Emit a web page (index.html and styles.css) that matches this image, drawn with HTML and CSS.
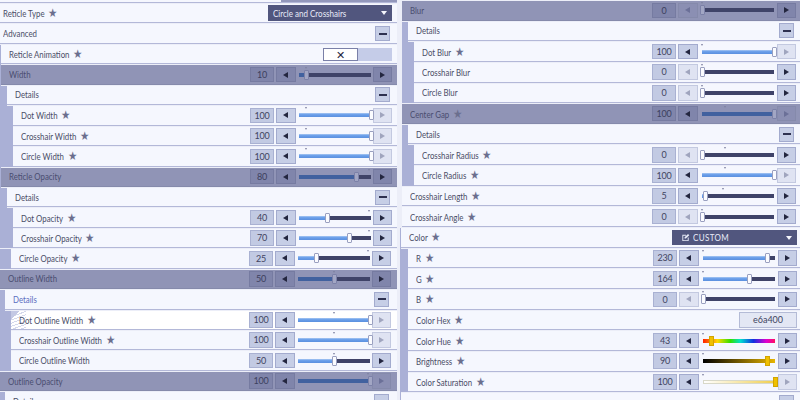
FILE: index.html
```html
<!DOCTYPE html>
<html lang="en">
<head>
    <meta charset="UTF-8">
    <title>Reticle Settings</title>
    <link rel="stylesheet" href="styles.css">
</head>
<body>
<div class="page">

    <!-- left column -->
    <div class="col col-left">
        <div class="top-row"><div class="top-row-select"></div></div>
        <div class="row flat">
            <span class="label">Reticle Type <i>★</i></span>
            <div class="select"><span>Circle and Crosshairs</span></div>
        </div>
        <div class="row flat">
            <span class="label">Advanced</span>
            <button class="minus"></button>
        </div>
        <div class="sub s1">
            <div class="row">
                <span class="label">Reticle Animation <i>★</i></span>
                <div class="toggle"><span class="toggle-off">✕</span></div>
            </div>
            <div class="row dark">
                <span class="label">Width</span>
                <div class="value">10</div><button class="btn prev"></button>
                <div class="slider"><div class="track"><div class="fill" style="width:10%"></div></div><b class="tick" style="left:10%"></b><b class="thumb" style="left:10%"></b></div>
                <button class="btn next"></button>
            </div>
            <div class="sub s6">
                <div class="row">
                    <span class="label">Details</span>
                    <button class="minus"></button>
                </div>
                <div class="sub s6">
                    <div class="row">
                        <span class="label">Dot Width <i>★</i></span>
                        <div class="value">100</div><button class="btn prev"></button>
                        <div class="slider"><div class="track"><div class="fill" style="width:100%"></div></div><b class="tick" style="left:10%"></b><b class="thumb" style="left:100%"></b></div>
                        <button class="btn next off"></button>
                    </div>
                    <div class="row">
                        <span class="label">Crosshair Width <i>★</i></span>
                        <div class="value">100</div><button class="btn prev"></button>
                        <div class="slider"><div class="track"><div class="fill" style="width:100%"></div></div><b class="tick" style="left:10%"></b><b class="thumb" style="left:100%"></b></div>
                        <button class="btn next off"></button>
                    </div>
                    <div class="row">
                        <span class="label">Circle Width <i>★</i></span>
                        <div class="value">100</div><button class="btn prev"></button>
                        <div class="slider"><div class="track"><div class="fill" style="width:100%"></div></div><b class="tick" style="left:10%"></b><b class="thumb" style="left:100%"></b></div>
                        <button class="btn next off"></button>
                    </div>
                </div>
            </div>
            <div class="row dark">
                <span class="label">Reticle Opacity</span>
                <div class="value">80</div><button class="btn prev"></button>
                <div class="slider"><div class="track"><div class="fill" style="width:80%"></div></div><b class="tick" style="left:98%"></b><b class="thumb" style="left:80%"></b></div>
                <button class="btn next"></button>
            </div>
            <div class="sub s6">
                <div class="row">
                    <span class="label">Details</span>
                    <button class="minus"></button>
                </div>
                <div class="sub s6">
                    <div class="row">
                        <span class="label">Dot Opacity <i>★</i></span>
                        <div class="value">40</div><button class="btn prev"></button>
                        <div class="slider"><div class="track"><div class="fill" style="width:40%"></div></div><b class="tick" style="left:98%"></b><b class="thumb" style="left:40%"></b></div>
                        <button class="btn next"></button>
                    </div>
                    <div class="row">
                        <span class="label">Crosshair Opacity <i>★</i></span>
                        <div class="value">70</div><button class="btn prev"></button>
                        <div class="slider"><div class="track"><div class="fill" style="width:70%"></div></div><b class="tick" style="left:98%"></b><b class="thumb" style="left:70%"></b></div>
                        <button class="btn next"></button>
                    </div>
                </div>
            </div>
        </div>

        <!-- this part sits a pixel further left in the capture -->
        <div class="sub s11">
            <div class="row skew">
                <span class="label">Circle Opacity <i>★</i></span>
                <div class="value">25</div><button class="btn prev"></button>
                <div class="slider"><div class="track"><div class="fill" style="width:25%"></div></div><b class="tick" style="left:98%"></b><b class="thumb" style="left:25%"></b></div>
                <button class="btn next"></button>
            </div>
        </div>
        <div class="row dark skew">
            <span class="label">Outline Width</span>
            <div class="value">50</div><button class="btn prev"></button>
            <div class="slider"><div class="track"><div class="fill" style="width:50%"></div></div><b class="tick" style="left:50%"></b><b class="thumb" style="left:50%"></b></div>
            <button class="btn next"></button>
        </div>
        <div class="sub s5">
            <div class="row skew">
                <span class="label active">Details</span>
                <button class="minus"></button>
            </div>
            <div class="sub s6">
                <div class="row skew hover">
                    <span class="label">Dot Outline Width <i>★</i></span>
                    <div class="value">100</div><button class="btn prev"></button>
                    <div class="slider"><div class="track"><div class="fill" style="width:100%"></div></div><b class="tick" style="left:50%"></b><b class="thumb" style="left:100%"></b></div>
                    <button class="btn next off"></button>
                </div>
                <div class="row skew">
                    <span class="label">Crosshair Outline Width <i>★</i></span>
                    <div class="value">100</div><button class="btn prev"></button>
                    <div class="slider"><div class="track"><div class="fill" style="width:100%"></div></div><b class="tick" style="left:50%"></b><b class="thumb" style="left:100%"></b></div>
                    <button class="btn next off"></button>
                </div>
                <div class="row skew">
                    <span class="label">Circle Outline Width</span>
                    <div class="value">50</div><button class="btn prev"></button>
                    <div class="slider"><div class="track"><div class="fill" style="width:50%"></div></div><b class="tick" style="left:50%"></b><b class="thumb" style="left:50%"></b></div>
                    <button class="btn next"></button>
                </div>
            </div>
        </div>
        <div class="row dark skew">
            <span class="label">Outline Opacity</span>
            <div class="value">100</div><button class="btn prev"></button>
            <div class="slider"><div class="track"><div class="fill" style="width:100%"></div></div><b class="tick" style="left:98%"></b><b class="thumb" style="left:100%"></b></div>
            <button class="btn next off"></button>
        </div>
        <div class="sub s5">
            <div class="row skew">
                <span class="label">Details</span>
                <button class="minus"></button>
            </div>
        </div>
    </div>

    <!-- right column -->
    <div class="col col-right">
        <div class="sub s2">
            <div class="row dark">
                <span class="label">Blur</span>
                <div class="value">0</div><button class="btn prev off"></button>
                <div class="slider"><div class="track"></div><b class="tick" style="left:0"></b><b class="thumb" style="left:0"></b></div>
                <button class="btn next"></button>
            </div>
            <div class="sub s6">
                <div class="row">
                    <span class="label">Details</span>
                    <button class="minus"></button>
                </div>
                <div class="sub s6">
                    <div class="row">
                        <span class="label">Dot Blur <i>★</i></span>
                        <div class="value">100</div><button class="btn prev"></button>
                        <div class="slider"><div class="track"><div class="fill" style="width:100%"></div></div><b class="tick" style="left:0"></b><b class="thumb" style="left:100%"></b></div>
                        <button class="btn next off"></button>
                    </div>
                    <div class="row">
                        <span class="label">Crosshair Blur</span>
                        <div class="value">0</div><button class="btn prev off"></button>
                        <div class="slider"><div class="track"></div><b class="tick" style="left:0"></b><b class="thumb" style="left:0"></b></div>
                        <button class="btn next"></button>
                    </div>
                    <div class="row">
                        <span class="label">Circle Blur</span>
                        <div class="value">0</div><button class="btn prev off"></button>
                        <div class="slider"><div class="track"></div><b class="tick" style="left:0"></b><b class="thumb" style="left:0"></b></div>
                        <button class="btn next"></button>
                    </div>
                </div>
            </div>
            <div class="row dark">
                <span class="label">Center Gap <i>★</i></span>
                <div class="value">100</div><button class="btn prev"></button>
                <div class="slider"><div class="track"><div class="fill" style="width:100%"></div></div><b class="tick" style="left:33%"></b><b class="thumb" style="left:100%"></b></div>
                <button class="btn next off"></button>
            </div>
            <div class="sub s6">
                <div class="row">
                    <span class="label">Details</span>
                    <button class="minus"></button>
                </div>
                <div class="sub s6">
                    <div class="row">
                        <span class="label">Crosshair Radius <i>★</i></span>
                        <div class="value">0</div><button class="btn prev off"></button>
                        <div class="slider"><div class="track"></div><b class="tick" style="left:33%"></b><b class="thumb" style="left:0"></b></div>
                        <button class="btn next"></button>
                    </div>
                    <div class="row">
                        <span class="label">Circle Radius <i>★</i></span>
                        <div class="value">100</div><button class="btn prev"></button>
                        <div class="slider"><div class="track"><div class="fill" style="width:100%"></div></div><b class="tick" style="left:33%"></b><b class="thumb" style="left:100%"></b></div>
                        <button class="btn next off"></button>
                    </div>
                </div>
            </div>
            <div class="row">
                <span class="label">Crosshair Length <i>★</i></span>
                <div class="value">5</div><button class="btn prev"></button>
                <div class="slider"><div class="track"><div class="fill" style="width:5%"></div></div><b class="tick" style="left:30%"></b><b class="thumb" style="left:5%"></b></div>
                <button class="btn next"></button>
            </div>
            <div class="row">
                <span class="label">Crosshair Angle <i>★</i></span>
                <div class="value">0</div><button class="btn prev off"></button>
                <div class="slider"><div class="track"></div><b class="tick" style="left:0"></b><b class="thumb" style="left:0"></b></div>
                <button class="btn next"></button>
            </div>
        </div>
        <div class="sub s1">
            <div class="row tight">
                <span class="label">Color <i>★</i></span>
                <div class="select select-custom">
                    <svg class="edit-icon" viewBox="0 0 10 10"><path d="M1.5 2h4v1h-3v5h5v-3h1v4h-7z M4 6.200l0-1.400l3.800-3.800l1.400 1.400l-3.800 3.800z" fill="#e8ebf8"/></svg>
                    <span>CUSTOM</span>
                </div>
            </div>
            <div class="sub s6b">
                <div class="row flush">
                    <span class="label">R <i>★</i></span>
                    <div class="value">230</div><button class="btn prev"></button>
                    <div class="slider"><div class="track"><div class="fill" style="width:90%"></div></div><b class="tick" style="left:0"></b><b class="thumb" style="left:90%"></b></div>
                    <button class="btn next"></button>
                </div>
                <div class="row flush">
                    <span class="label">G <i>★</i></span>
                    <div class="value">164</div><button class="btn prev"></button>
                    <div class="slider"><div class="track"><div class="fill" style="width:64%"></div></div><b class="tick" style="left:0"></b><b class="thumb" style="left:64%"></b></div>
                    <button class="btn next"></button>
                </div>
                <div class="row flush">
                    <span class="label">B <i>★</i></span>
                    <div class="value">0</div><button class="btn prev off"></button>
                    <div class="slider"><div class="track"></div><b class="tick" style="left:0"></b><b class="thumb" style="left:0"></b></div>
                    <button class="btn next"></button>
                </div>
                <div class="row flush">
                    <span class="label">Color Hex <i>★</i></span>
                    <div class="hex">e6a400</div>
                </div>
                <div class="row flush">
                    <span class="label">Color Hue <i>★</i></span>
                    <div class="value">43</div><button class="btn prev"></button>
                    <div class="slider"><div class="track track-hue"></div><b class="tick" style="left:0"></b><b class="thumb thumb-gold" style="left:12%"></b></div>
                    <button class="btn next"></button>
                </div>
                <div class="row flush">
                    <span class="label">Brightness <i>★</i></span>
                    <div class="value">90</div><button class="btn prev"></button>
                    <div class="slider"><div class="track track-bright"></div><b class="tick" style="left:0"></b><b class="thumb thumb-gold" style="left:90%"></b></div>
                    <button class="btn next"></button>
                </div>
                <div class="row flush">
                    <span class="label">Color Saturation <i>★</i></span>
                    <div class="value">100</div><button class="btn prev"></button>
                    <div class="slider"><div class="track track-sat"></div><b class="tick" style="left:0"></b><b class="thumb thumb-gold" style="left:100%"></b></div>
                    <button class="btn next off"></button>
                </div>
            </div>
            <div class="row">
                <span class="label"></span>
                <button class="minus"></button>
            </div>
        </div>
    </div>

</div>
</body>
</html>
```

FILE: styles.css
```css
* {
    box-sizing: border-box;
    margin: 0;
    padding: 0;
}

body {
    width: 800px;
    height: 400px;
    overflow: hidden;
    background-color: #eceef8;
    font-family: Lato, "Liberation Sans", sans-serif;
    font-size: 9px;
    color: #4a4d66;
}

.page {
    display: flex;
    height: 400px;
    overflow: hidden;
}

.col {
    display: flex;
    flex-direction: column;
    gap: 1px;
}

.col-left {
    width: 397px;
    margin-right: 3px;
}

.col-right {
    width: 400px;
    padding-top: 1px;
}

.top-row {
    flex-shrink: 0;
    height: 3px;
    background-color: #f5f7fe;
    border-bottom: 1px solid #b3b8d8;
}

.top-row-select {
    height: 2px;
    margin-left: 281px;
    background-color: #9297bb;
}

/* nested groups, the gutter on the left is the indent */
.sub {
    display: flex;
    flex-direction: column;
    flex-shrink: 0;
    gap: 1px;
    border-left: 0 solid #aab0d6;
}

.s1 { border-left-width: 1px; }
.s2 { border-left: 2px solid #eceef8; }
.s5 { border-left-width: 5px; }
.s6 { border-left-width: 6px; }
.s6b { border-left-width: 7px; }
.s11 { border-left-width: 11px; }

.row {
    display: flex;
    flex-shrink: 0;
    align-items: center;
    height: 19.45px;
    padding: 0 5px 0 8px;
    background-color: #f5f7fe;
    border-bottom: 1px solid #b3b8d8;
    position: relative;
}

.col-right .row {
    height: 19.65px;
    padding-right: 4px;
}

.flat {
    padding-left: 3px;
}

.skew {
    padding-right: 6px;
}

.col-right .tight,
.col-right .flush {
    padding-right: 3px;
}

.dark {
    background-color: #9094b6;
    border-bottom-color: #858aab;
    color: #4a4d70;
}

.hover {
    background-color: #ffffff;
}

.hover::before {
    content: "";
    position: absolute;
    left: 0;
    top: 0;
    width: 15px;
    height: 18px;
    background:
        linear-gradient(135deg, #c3c8e4 0, #c3c8e4 26%, transparent 27%),
        repeating-linear-gradient(160deg, transparent 0, transparent 2px, #d4d8ec 2px, #d4d8ec 3px);
}

/* the game font is narrower than anything installed */
.label {
    flex: 1;
    white-space: nowrap;
    transform: scaleX(0.87);
    transform-origin: left center;
}

.label i {
    font-style: normal;
    font-size: 12px;
    line-height: 1;
    color: #6b6f8e;
    margin-left: 2px;
}

.active {
    color: #5b6ec0;
}

.value {
    width: 24px;
    height: 15.500px;
    line-height: 14px;
    text-align: center;
    letter-spacing: -0.3px;
    background-color: #c2cae3;
    border: 1px solid #a9b1d2;
    color: #41445f;
}

.dark .value {
    background-color: #8085ab;
    border-color: #767ba1;
    color: #3c3f5e;
}

.btn {
    display: flex;
    align-items: center;
    justify-content: center;
    width: 19.500px;
    height: 15.500px;
    margin-left: 2px;
    background-color: #c6cee6;
    border: 1px solid #a3abce;
}

.btn::before {
    content: "";
    border-top: 3px solid transparent;
    border-bottom: 3px solid transparent;
}

.prev::before {
    border-right: 5px solid #23263f;
}

.next::before {
    border-left: 5px solid #23263f;
}

.btn.off {
    background-color: #dfe3f2;
    border-color: #c3c9e0;
}

.off.prev::before {
    border-right-color: #a0a5be;
}

.off.next::before {
    border-left-color: #a0a5be;
}

.dark .btn {
    background-color: #8085ab;
    border-color: #767ba1;
}

.dark .btn.off {
    background-color: #8b8fb3;
    border-color: #858aab;
}

.dark .off.prev::before {
    border-right-color: #6b7098;
}

.dark .off.next::before {
    border-left-color: #6b7098;
}

.minus {
    display: flex;
    align-items: center;
    justify-content: center;
    width: 15px;
    height: 15px;
    margin-right: 2px;
    background-color: #c6cee6;
    border: 1px solid #a3abce;
}

.minus::before {
    content: "";
    width: 8px;
    height: 2px;
    background-color: #2e3150;
}

.slider {
    position: relative;
    width: 72px;
    height: 16px;
    margin-left: 3px;
}

.col-right .slider {
    margin: 0 1px 0 4px;
}

.track {
    position: absolute;
    left: 0;
    right: 0;
    top: 6px;
    height: 4px;
    background-color: #3f4368;
}

.fill {
    height: 100%;
    background: linear-gradient(#a9c8f2, #6a9fea 40%, #5b90df);
}

.dark .fill {
    background: #41619f;
}

.track-hue {
    background: linear-gradient(90deg, #ff2000, #ffd800 20%, #30e000 38%, #00e0d0 52%, #1030e0 70%, #e000d0 88%, #ff1060);
}

.track-bright {
    background: linear-gradient(90deg, #000000, #e6b400);
}

.track-sat {
    background: linear-gradient(90deg, #ffffff, #f0cf50);
    border: 1px solid #d8d8c8;
}

.thumb {
    position: absolute;
    top: 3px;
    width: 5px;
    height: 10px;
    margin-left: -2px;
    background-color: #fbfcff;
    border: 1px solid #9aa0c0;
    border-radius: 1px;
}

.dark .thumb {
    background-color: #a2a6c4;
    border-color: #7c81a8;
}

.thumb-gold {
    background-color: #f0c000;
    border-color: #d2a400;
    border-radius: 0;
}

.tick {
    position: absolute;
    top: 0;
    margin-left: -1px;
    border-top: 2px solid #7c80a0;
    border-left: 1px solid transparent;
    border-right: 1px solid transparent;
}

.select {
    display: flex;
    align-items: center;
    width: 124px;
    height: 15.500px;
    padding-left: 5px;
    background-color: #51567e;
    color: #e8ebf8;
    position: relative;
}

.select span {
    transform: scaleX(0.89);
    transform-origin: left center;
    white-space: nowrap;
}

.select::after {
    content: "";
    position: absolute;
    right: 5px;
    top: 6px;
    border-left: 3px solid transparent;
    border-right: 3px solid transparent;
    border-top: 4px solid #f5f6fc;
}

.select-custom {
    width: 125px;
    padding-left: 9px;
    letter-spacing: 0.4px;
}

.edit-icon {
    width: 9px;
    height: 9px;
    margin-right: 3px;
}

.hex {
    width: 58px;
    height: 15.500px;
    line-height: 14px;
    text-align: center;
    background-color: #e3e7f4;
    border: 1px solid #b4bbd6;
    color: #41445f;
}

.toggle {
    width: 69px;
    height: 13px;
    background-color: #c5cce8;
}

.toggle-off {
    display: block;
    width: 35px;
    height: 13px;
    line-height: 11px;
    text-align: center;
    background-color: #ffffff;
    border: 1px solid #7a80a8;
    color: #23263f;
    font-size: 11px;
}
```
